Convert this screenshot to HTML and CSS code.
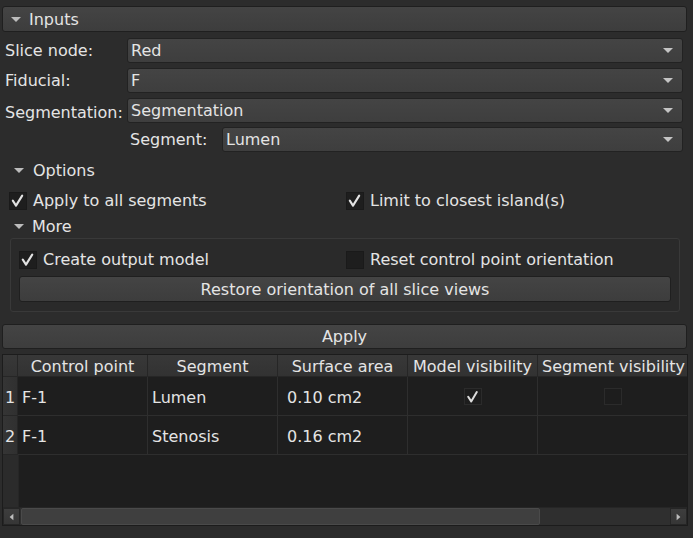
FILE: index.html
```html
<!DOCTYPE html>
<html>
<head>
<meta charset="utf-8">
<link rel="stylesheet" href="styles.css">
</head>
<body>
<div class="panel">
  <div class="collapse-btn"><span class="tri"></span><span>Inputs</span></div>

  <div class="form">
    <div class="frow"><span class="flabel">Slice node:</span><div class="combo"><span>Red</span><span class="arrow"></span></div></div>
    <div class="frow gap5"><span class="flabel">Fiducial:</span><div class="combo"><span>F</span><span class="arrow"></span></div></div>
    <div class="frow gap5"><span class="flabel low">Segmentation:</span><div class="combo"><span>Segmentation</span><span class="arrow"></span></div></div>
    <div class="frow gap4 sub"><span class="flabel sublabel">Segment:</span><div class="combo"><span>Lumen</span><span class="arrow"></span></div></div>
  </div>

  <div class="section sec-options"><span class="tri"></span><span>Options</span></div>
  <div class="checks top-checks">
    <div class="check"><span class="box"><svg width="17" height="17" viewBox="0 0 17 17"><path d="M3.8 8.6 L7 13.6 L13.2 3.6" fill="none" stroke="#e2e2e2" stroke-width="2.1" stroke-linecap="round" stroke-linejoin="round"/></svg></span><span>Apply to all segments</span></div>
    <div class="check"><span class="box"><svg width="17" height="17" viewBox="0 0 17 17"><path d="M3.8 8.6 L7 13.6 L13.2 3.6" fill="none" stroke="#e2e2e2" stroke-width="2.1" stroke-linecap="round" stroke-linejoin="round"/></svg></span><span>Limit to closest island(s)</span></div>
  </div>
  <div class="section sec-more"><span class="tri"></span><span>More</span></div>

  <div class="group">
    <div class="checks group-checks">
      <div class="check"><span class="box"><svg width="17" height="17" viewBox="0 0 17 17"><path d="M3.8 8.6 L7 13.6 L13.2 3.6" fill="none" stroke="#e2e2e2" stroke-width="2.1" stroke-linecap="round" stroke-linejoin="round"/></svg></span><span>Create output model</span></div>
      <div class="check"><span class="box"></span><span>Reset control point orientation</span></div>
    </div>
    <div class="btn restore">Restore orientation of all slice views</div>
  </div>

  <div class="btn apply">Apply</div>

  <div class="table">
    <div class="grid">
      <div class="hcell corner"></div>
      <div class="hcell">Control point</div>
      <div class="hcell">Segment</div>
      <div class="hcell">Surface area</div>
      <div class="hcell">Model visibility</div>
      <div class="hcell last">Segment visibility</div>

      <div class="rhead">1</div>
      <div class="cell">F-1</div>
      <div class="cell">Lumen</div>
      <div class="cell area">0.10 cm2</div>
      <div class="cell center"><span class="tbox"><svg width="17" height="17" viewBox="0 0 17 17"><path d="M4.2 8.8 L7.2 13.4 L12.8 4" fill="none" stroke="#dcdcdc" stroke-width="2" stroke-linecap="round" stroke-linejoin="round"/></svg></span></div>
      <div class="cell center last"><span class="tbox"></span></div>

      <div class="rhead">2</div>
      <div class="cell">F-1</div>
      <div class="cell">Stenosis</div>
      <div class="cell area">0.16 cm2</div>
      <div class="cell"></div>
      <div class="cell last"></div>
    </div>
    <div class="filler"><div class="filler-head"></div></div>
    <div class="hscroll">
      <div class="sbtn"><svg width="16" height="16" viewBox="0 0 16 16"><path d="M6 8 L10 4.5 L10 11.5 Z" fill="#bdbdbd"/></svg></div>
      <div class="track"><div class="thumb"></div></div>
      <div class="sbtn"><svg width="16" height="16" viewBox="0 0 16 16"><path d="M10 8 L6 4.5 L6 11.5 Z" fill="#bdbdbd"/></svg></div>
    </div>
  </div>
</div>
</body>
</html>
```

FILE: styles.css
```css
html, body {
  margin: 0;
  padding: 0;
  background: #2c2c2c;
}
body {
  width: 693px;
  height: 538px;
  overflow: hidden;
  font-family: "DejaVu Sans", "Liberation Sans", sans-serif;
  font-size: 16px;
  color: #e4e4e4;
}
.panel {
  padding-top: 6px;
}
.tri {
  display: inline-block;
  width: 0;
  height: 0;
  border-left: 5px solid transparent;
  border-right: 5px solid transparent;
  border-top: 5px solid #bcbcbc;
}
.collapse-btn {
  box-sizing: border-box;
  height: 26px;
  margin: 0 6px 0 2px;
  border: 1px solid #1f1f1f;
  border-radius: 3px;
  background: linear-gradient(#444444, #3d3d3d);
  display: flex;
  align-items: center;
  padding-left: 8px;
  padding-top: 1px;
}
.collapse-btn .tri {
  margin-right: 8px;
  margin-top: -1px;
}
.form {
  margin-top: 6px;
  padding: 0 10px 0 5px;
}
.frow {
  display: flex;
  align-items: center;
  height: 25px;
}
.gap5 { margin-top: 5px; }
.gap4 { margin-top: 4px; }
.flabel {
  width: 122px;
  flex: none;
}
.flabel.low {
  padding-top: 4px;
}
.frow.sub {
  padding-left: 125px;
}
.flabel.sublabel {
  width: 92px;
}
.combo {
  flex: 1;
  box-sizing: border-box;
  height: 25px;
  border: 1px solid #222222;
  border-radius: 3px;
  background: linear-gradient(#444444, #3e3e3e);
  display: flex;
  align-items: center;
  justify-content: space-between;
  padding: 0 9px 0 3px;
}
.arrow {
  width: 0;
  height: 0;
  border-left: 5px solid transparent;
  border-right: 5px solid transparent;
  border-top: 5px solid #c4c4c4;
}
.section {
  height: 24px;
  display: flex;
  align-items: center;
  padding-left: 14px;
  box-sizing: border-box;
}
.sec-options {
  margin-top: 6px;
}
.sec-options .tri { margin-right: 9px; }
.sec-more .tri { margin-right: 8px; }
.sec-more {
  margin-top: 6px;
}
.checks {
  display: grid;
  grid-template-columns: 337px 1fr;
  height: 17px;
  align-items: center;
}
.top-checks {
  margin-top: 9px;
  padding-left: 9px;
}
.check {
  display: flex;
  align-items: center;
  gap: 6px;
}
.box {
  box-sizing: border-box;
  width: 18px;
  height: 18px;
  background: #1e1e1e;
  border: 1px solid #1a1a1a;
  flex: none;
  display: block;
}
.box svg { display: block; margin: -0.5px -1px; }
.group {
  box-sizing: border-box;
  margin: 0 13px 0 10px;
  height: 74px;
  border: 1px solid #393939;
  border-radius: 3px;
  background: #2a2a2a;
  padding: 11px 8px 8px 8px;
}
.group-checks {
  grid-template-columns: 327px 1fr;
}
.btn {
  box-sizing: border-box;
  border: 1px solid #1f1f1f;
  border-radius: 3px;
  background: linear-gradient(#444444, #3d3d3d);
  display: flex;
  align-items: center;
  justify-content: center;
}
.restore {
  margin-top: 9px;
  height: 26px;
}
.apply {
  margin: 12px 6px 0 2px;
  height: 25px;
}
.table {
  box-sizing: border-box;
  margin: 5px 5px 0 2px;
  height: 172px;
  border: 1px solid #1c1c1c;
  background: #1e1e1e;
  overflow: hidden;
  display: flex;
  flex-direction: column;
}
.grid {
  display: grid;
  grid-template-columns: 15px 130px 130px 130px 130px 160px;
  grid-template-rows: 22px 39px 39px;
  width: 705px;
}
.hcell {
  box-sizing: border-box;
  background: linear-gradient(#383838, #323232);
  border-right: 1px solid #262626;
  border-bottom: 1px solid #262626;
  display: flex;
  align-items: center;
  justify-content: center;
  white-space: nowrap;
  color: #e4e4e4;
  padding-top: 1px;
}
.hcell.last {
  justify-content: flex-start;
  padding-left: 4px;
}
.rhead {
  box-sizing: border-box;
  background: linear-gradient(90deg, #353535, #303030);
  border-right: 1px solid #262626;
  border-bottom: 1px solid #262626;
  display: flex;
  align-items: center;
  padding-left: 2px;
  padding-top: 2px;
}
.cell {
  box-sizing: border-box;
  border-right: 1px solid #2e2e2e;
  border-bottom: 1px solid #2e2e2e;
  display: flex;
  align-items: center;
  padding-left: 4px;
  padding-top: 2px;
  white-space: nowrap;
}
.cell.area {
  padding-left: 9px;
}
.cell.center {
  justify-content: center;
  padding-left: 0;
  padding-top: 0;
}
.cell.center.last {
  justify-content: flex-start;
  padding-left: 66px;
}
.tbox {
  box-sizing: border-box;
  width: 18px;
  height: 17px;
  border: 1px solid #2b2b2b;
  background: #1d1d1d;
  display: block;
}
.tbox svg { display: block; margin: -1px; }
.filler {
  flex: 1;
  display: flex;
}
.filler-head {
  width: 15px;
  background: #2b2b2b;
  border-right: 1px solid #262626;
}
.hscroll {
  height: 18px;
  display: flex;
  background: #2e2e2e;
  border-top: 1px solid #262626;
  box-sizing: border-box;
}
.sbtn {
  box-sizing: border-box;
  width: 17px;
  border: 1px solid #262626;
  background: linear-gradient(#3d3d3d, #363636);
  display: flex;
  align-items: center;
  justify-content: center;
}
.track {
  flex: 1;
  padding: 0 1px;
  display: flex;
  background: #2f2f2f;
}
.thumb {
  box-sizing: border-box;
  width: 519px;
  border: 1px solid #4a4a4a;
  border-radius: 2px;
  background: #3f3f3f;
}
```
